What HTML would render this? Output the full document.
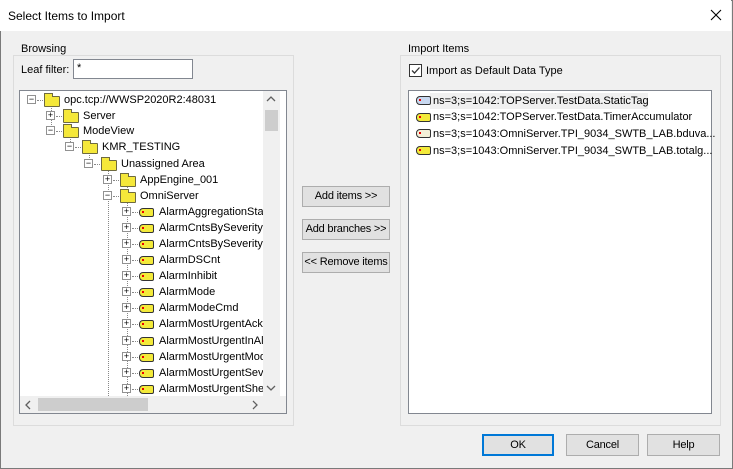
<!DOCTYPE html>
<html><head><style>
*{box-sizing:border-box;margin:0;padding:0}
body{width:733px;height:469px;overflow:hidden;background:#f0f0f0;font-family:"Liberation Sans",sans-serif;font-size:11px;color:#000;position:relative}
.win{position:absolute;left:0;top:0;width:733px;height:469px;border:1px solid #7a7a7a}
.title{position:absolute;left:0;top:0;width:731px;height:31px;background:#fff}
.title span{position:absolute;left:8px;top:9px;font-size:12px}
.a{position:absolute;white-space:nowrap}
.grp{position:absolute;border:1px solid #dcdcdc}
.lbl{position:absolute;background:#f0f0f0;padding:0 2px}
.box{position:absolute;background:#fff;border:1px solid #828790}
.btn{position:absolute;background:#e1e1e1;border:1px solid #adadad;text-align:center;line-height:18px;font-size:11px;white-space:nowrap;letter-spacing:-0.2px}
.ex{position:absolute;width:9px;height:9px;border:1px solid #919191;background:#fff;font-size:9px;line-height:7px;text-align:center;color:#000}
.fo{position:absolute;width:16px;height:11px;background:#f5e83a;border:1px solid #6e6a40;border-radius:1px}
.fo:before{content:"";position:absolute;left:-1px;top:-4px;width:7px;height:3px;border:1px solid #6e6a40;border-bottom:none;background:#f5e83a}
.tg{position:absolute;width:15px;height:9px;background:#f3ea3a;border:1px solid #333;border-radius:4px 2px 2px 4px}
.tg:after{content:"";position:absolute;left:2px;top:2px;width:2px;height:2px;background:#e00}
.dh{position:absolute;border-top:1px dotted #888;height:0}
.dv{position:absolute;border-left:1px dotted #888;width:0}
</style></head><body>
<div class="win"></div>
<div class="title"><span>Select Items to Import</span>
<svg style="position:absolute;left:710px;top:9px" width="12" height="12"><path d="M1 1L11 11M11 1L1 11" stroke="#000" stroke-width="1.1"/></svg></div>

<div class="grp" style="left:13px;top:55px;width:281px;height:371px"></div>
<div class="lbl a" style="left:19px;top:43px">Browsing</div>
<div class="a" style="left:21px;top:64px">Leaf filter:</div>
<div class="box" style="left:73px;top:59px;width:120px;height:20px"><span class="a" style="left:3px;top:2px">*</span></div>

<div class="box" style="left:19px;top:90px;width:268px;height:324px;overflow:hidden">
<div class="a" style="left:243px;top:0;width:17px;height:305px;background:#f0f0f0"></div>
<div class="a" style="left:245px;top:19px;width:13px;height:23px;background:#cdcdcd"></div>
<svg class="a" style="left:246px;top:5px" width="10" height="6"><path d="M1 5L5 1L9 5" stroke="#606060" fill="none" stroke-width="1.3"/></svg>
<div class="a" style="left:0;top:305px;width:266px;height:17px;background:#f0f0f0"></div>
<div class="a" style="left:18px;top:307px;width:110px;height:13px;background:#cdcdcd"></div>
<svg class="a" style="left:5px;top:309px" width="6" height="10"><path d="M5 1L1 5L5 9" stroke="#606060" fill="none" stroke-width="1.3"/></svg>
<svg class="a" style="left:232px;top:309px" width="6" height="10"><path d="M1 1L5 5L1 9" stroke="#606060" fill="none" stroke-width="1.3"/></svg>
</div>

<div class="dv" style="left:51px;top:105px;height:30px"></div>
<div class="dv" style="left:70px;top:136px;height:14px"></div>
<div class="dv" style="left:89px;top:152px;height:14px"></div>
<div class="dv" style="left:108px;top:168px;height:228px"></div>
<div class="dv" style="left:127px;top:184px;height:14px"></div>
<div class="dv" style="left:127px;top:200px;height:196px"></div>

<div class="ex" style="left:27px;top:95px">−</div><div class="dh" style="left:37px;top:100px;width:6px"></div><div class="fo" style="left:44px;top:96px"></div><div class="a" style="left:64px;top:94px">opc.tcp://WWSP2020R2:48031</div>
<div class="ex" style="left:46px;top:111px">+</div><div class="dh" style="left:56px;top:116px;width:6px"></div><div class="fo" style="left:63px;top:112px"></div><div class="a" style="left:83px;top:110px">Server</div>
<div class="ex" style="left:46px;top:126px">−</div><div class="dh" style="left:56px;top:131px;width:6px"></div><div class="fo" style="left:63px;top:127px"></div><div class="a" style="left:83px;top:125px">ModeView</div>
<div class="ex" style="left:65px;top:142px">−</div><div class="dh" style="left:75px;top:147px;width:6px"></div><div class="fo" style="left:82px;top:143px"></div><div class="a" style="left:102px;top:141px">KMR_TESTING</div>
<div class="ex" style="left:84px;top:159px">−</div><div class="dh" style="left:94px;top:164px;width:6px"></div><div class="fo" style="left:101px;top:160px"></div><div class="a" style="left:121px;top:158px">Unassigned Area</div>
<div class="ex" style="left:103px;top:175px">+</div><div class="dh" style="left:113px;top:180px;width:6px"></div><div class="fo" style="left:120px;top:176px"></div><div class="a" style="left:140px;top:174px">AppEngine_001</div>
<div class="ex" style="left:103px;top:191px">−</div><div class="dh" style="left:113px;top:196px;width:6px"></div><div class="fo" style="left:120px;top:192px"></div><div class="a" style="left:140px;top:190px">OmniServer</div>

<div class="ex" style="left:122px;top:207px">+</div><div class="dh" style="left:132px;top:212px;width:6px"></div><div class="tg" style="left:139px;top:208px"></div><div class="a" style="left:159px;top:206px">AlarmAggregationState</div>
<div class="ex" style="left:122px;top:223px">+</div><div class="dh" style="left:132px;top:228px;width:6px"></div><div class="tg" style="left:139px;top:224px"></div><div class="a" style="left:159px;top:222px">AlarmCntsBySeverity</div>
<div class="ex" style="left:122px;top:239px">+</div><div class="dh" style="left:132px;top:244px;width:6px"></div><div class="tg" style="left:139px;top:240px"></div><div class="a" style="left:159px;top:238px">AlarmCntsBySeverityE</div>
<div class="ex" style="left:122px;top:255px">+</div><div class="dh" style="left:132px;top:260px;width:6px"></div><div class="tg" style="left:139px;top:256px"></div><div class="a" style="left:159px;top:254px">AlarmDSCnt</div>
<div class="ex" style="left:122px;top:271px">+</div><div class="dh" style="left:132px;top:276px;width:6px"></div><div class="tg" style="left:139px;top:272px"></div><div class="a" style="left:159px;top:270px">AlarmInhibit</div>
<div class="ex" style="left:122px;top:287px">+</div><div class="dh" style="left:132px;top:292px;width:6px"></div><div class="tg" style="left:139px;top:288px"></div><div class="a" style="left:159px;top:286px">AlarmMode</div>
<div class="ex" style="left:122px;top:303px">+</div><div class="dh" style="left:132px;top:308px;width:6px"></div><div class="tg" style="left:139px;top:304px"></div><div class="a" style="left:159px;top:302px">AlarmModeCmd</div>
<div class="ex" style="left:122px;top:319px">+</div><div class="dh" style="left:132px;top:324px;width:6px"></div><div class="tg" style="left:139px;top:320px"></div><div class="a" style="left:159px;top:318px">AlarmMostUrgentAcke</div>
<div class="ex" style="left:122px;top:336px">+</div><div class="dh" style="left:132px;top:341px;width:6px"></div><div class="tg" style="left:139px;top:337px"></div><div class="a" style="left:159px;top:335px">AlarmMostUrgentInAla</div>
<div class="ex" style="left:122px;top:352px">+</div><div class="dh" style="left:132px;top:357px;width:6px"></div><div class="tg" style="left:139px;top:353px"></div><div class="a" style="left:159px;top:351px">AlarmMostUrgentMode</div>
<div class="ex" style="left:122px;top:368px">+</div><div class="dh" style="left:132px;top:373px;width:6px"></div><div class="tg" style="left:139px;top:369px"></div><div class="a" style="left:159px;top:367px">AlarmMostUrgentSeve</div>
<div class="ex" style="left:122px;top:384px">+</div><div class="dh" style="left:132px;top:389px;width:6px"></div><div class="tg" style="left:139px;top:385px"></div><div class="a" style="left:159px;top:383px">AlarmMostUrgentShel</div>
<div class="a" style="left:263px;top:131px;width:17px;height:265px;background:#f0f0f0"></div>
<svg class="a" style="left:266px;top:385px" width="10" height="6"><path d="M1 1L5 5L9 1" stroke="#606060" fill="none" stroke-width="1.3"/></svg>

<div class="btn" style="left:302px;top:186px;width:88px;height:21px">Add items &gt;&gt;</div>
<div class="btn" style="left:302px;top:219px;width:88px;height:21px">Add branches &gt;&gt;</div>
<div class="btn" style="left:302px;top:252px;width:88px;height:21px">&lt;&lt; Remove items</div>

<div class="grp" style="left:400px;top:55px;width:321px;height:371px"></div>
<div class="lbl a" style="left:406px;top:43px">Import Items</div>
<div class="a" style="left:409px;top:64px;width:13px;height:13px;background:#fff;border:1px solid #333"></div>
<svg class="a" style="left:410px;top:65px" width="11" height="11"><path d="M2 5.5L4.5 8L9.5 2.5" stroke="#333" fill="none" stroke-width="1.3"/></svg>
<div class="a" style="left:426px;top:65px">Import as Default Data Type</div>

<div class="box" style="left:408px;top:90px;width:304px;height:324px"></div>
<div class="a" style="left:430px;top:93px;width:218px;height:16px;background:#f0f0f0"></div>
<div class="tg" style="left:416px;top:96px;background:#c8d8f0"></div><div class="a" style="left:433px;top:95px">ns=3;s=1042:TOPServer.TestData.StaticTag</div>
<div class="tg" style="left:416px;top:113px"></div><div class="a" style="left:433px;top:111px">ns=3;s=1042:TOPServer.TestData.TimerAccumulator</div>
<div class="tg" style="left:416px;top:129px;background:#f4f0d8"></div><div class="a" style="left:433px;top:128px">ns=3;s=1043:OmniServer.TPI_9034_SWTB_LAB.bduva...</div>
<div class="tg" style="left:416px;top:146px"></div><div class="a" style="left:433px;top:145px">ns=3;s=1043:OmniServer.TPI_9034_SWTB_LAB.totalg...</div>

<div class="btn" style="left:482px;top:434px;width:72px;height:22px;border:2px solid #0078d7;line-height:18px">OK</div>
<div class="btn" style="left:566px;top:434px;width:73px;height:22px;line-height:20px">Cancel</div>
<div class="btn" style="left:647px;top:434px;width:73px;height:22px;line-height:20px">Help</div>
</body></html>
